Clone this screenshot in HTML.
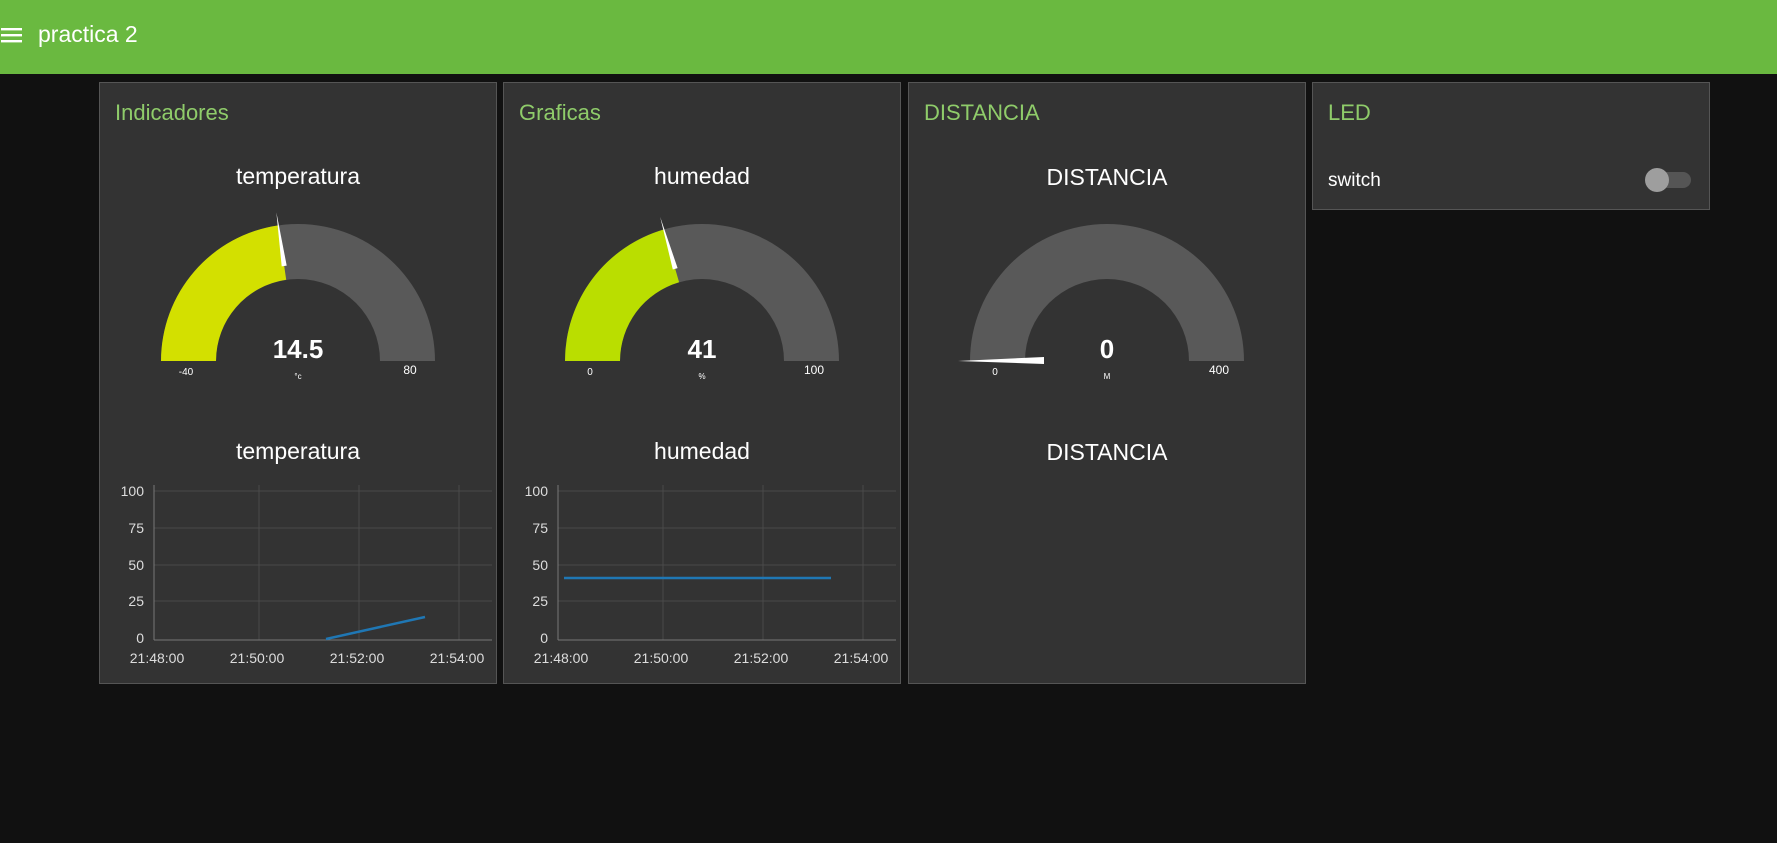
<!DOCTYPE html>
<html><head><meta charset="utf-8"><style>
*{margin:0;padding:0;box-sizing:border-box}
body{width:1777px;height:843px;background:#111;font-family:"Liberation Sans",sans-serif;overflow:hidden;position:relative}
.hdr{position:absolute;left:0;top:0;width:1777px;height:74px;background:#6ab940}
.hdr .t{position:absolute;left:38px;top:21px;color:#fff;font-size:23px}
.panel{position:absolute;top:82px;width:398px;background:#333;border:1px solid #555}
.panel svg{position:absolute;left:0;top:0}
</style></head><body>
<div class="hdr">
<svg style="position:absolute;left:1px;top:27px" width="22" height="16"><rect x="0" y="1" width="21" height="2.4" fill="#fff"/><rect x="0" y="7" width="21" height="2.4" fill="#fff"/><rect x="0" y="13" width="21" height="2.4" fill="#fff"/></svg>
<div class="t">practica 2</div></div>

<div class="panel" style="left:99px;height:602px">
<svg width="398" height="602" font-family="Liberation Sans, sans-serif">
<text x="15" y="37" fill="#8fcc6a" font-size="22">Indicadores</text>
<text x="198" y="101" fill="#fff" font-size="23" text-anchor="middle">temperatura</text>
<path d="M61 278 A137 137 0 0 1 335 278 L280 278 A82 82 0 0 0 116 278 Z" fill="#595959"/>
<path d="M61 278 A137 137 0 0 1 178.3 142.4 L186.2 196.8 A82 82 0 0 0 116 278 Z" fill="#d3e000"/>
<polygon points="176.4,129.5 181.7,183.4 186.7,182.6" fill="#fff"/>
<text x="198" y="275" fill="#fff" font-size="26" font-weight="bold" text-anchor="middle">14.5</text>
<text x="198" y="296" fill="#fff" font-size="8" text-anchor="middle">°c</text>
<text x="86" y="292" fill="#fff" font-size="10" text-anchor="middle">-40</text>
<text x="310" y="291" fill="#fff" font-size="12" text-anchor="middle">80</text>
<text x="198" y="376" fill="#fff" font-size="23" text-anchor="middle">temperatura</text>
<g stroke="#4a4a4a" stroke-width="1">
<line x1="54" y1="408" x2="392" y2="408"/><line x1="54" y1="445" x2="392" y2="445"/><line x1="54" y1="482" x2="392" y2="482"/><line x1="54" y1="518" x2="392" y2="518"/>
<line x1="159" y1="402" x2="159" y2="557"/><line x1="259" y1="402" x2="259" y2="557"/><line x1="359" y1="402" x2="359" y2="557"/>
</g>
<g stroke="#777"><line x1="54" y1="402" x2="54" y2="557"/><line x1="54" y1="557" x2="392" y2="557"/></g>
<g fill="#ddd" font-size="14" text-anchor="end"><text x="44" y="413">100</text><text x="44" y="450">75</text><text x="44" y="487">50</text><text x="44" y="523">25</text><text x="44" y="560">0</text></g>
<g fill="#ddd" font-size="14" text-anchor="middle"><text x="57" y="580">21:48:00</text><text x="157" y="580">21:50:00</text><text x="257" y="580">21:52:00</text><text x="357" y="580">21:54:00</text></g>
<line x1="226" y1="556" x2="325" y2="534" stroke="#1f77b4" stroke-width="2.5"/>
</svg></div>

<div class="panel" style="left:503px;height:602px">
<svg width="398" height="602" font-family="Liberation Sans, sans-serif">
<text x="15" y="37" fill="#8fcc6a" font-size="22">Graficas</text>
<text x="198" y="101" fill="#fff" font-size="23" text-anchor="middle">humedad</text>
<path d="M61 278 A137 137 0 0 1 335 278 L280 278 A82 82 0 0 0 116 278 Z" fill="#595959"/>
<path d="M61 278 A137 137 0 0 1 159.8 146.5 L175.1 199.3 A82 82 0 0 0 116 278 Z" fill="#bade00"/>
<polygon points="156.2,134 168.8,186.5 173.6,185.1" fill="#fff"/>
<text x="198" y="275" fill="#fff" font-size="26" font-weight="bold" text-anchor="middle">41</text>
<text x="198" y="296" fill="#fff" font-size="8" text-anchor="middle">%</text>
<text x="86" y="292" fill="#fff" font-size="10" text-anchor="middle">0</text>
<text x="310" y="291" fill="#fff" font-size="12" text-anchor="middle">100</text>
<text x="198" y="376" fill="#fff" font-size="23" text-anchor="middle">humedad</text>
<g stroke="#4a4a4a" stroke-width="1">
<line x1="54" y1="408" x2="392" y2="408"/><line x1="54" y1="445" x2="392" y2="445"/><line x1="54" y1="482" x2="392" y2="482"/><line x1="54" y1="518" x2="392" y2="518"/>
<line x1="159" y1="402" x2="159" y2="557"/><line x1="259" y1="402" x2="259" y2="557"/><line x1="359" y1="402" x2="359" y2="557"/>
</g>
<g stroke="#777"><line x1="54" y1="402" x2="54" y2="557"/><line x1="54" y1="557" x2="392" y2="557"/></g>
<g fill="#ddd" font-size="14" text-anchor="end"><text x="44" y="413">100</text><text x="44" y="450">75</text><text x="44" y="487">50</text><text x="44" y="523">25</text><text x="44" y="560">0</text></g>
<g fill="#ddd" font-size="14" text-anchor="middle"><text x="57" y="580">21:48:00</text><text x="157" y="580">21:50:00</text><text x="257" y="580">21:52:00</text><text x="357" y="580">21:54:00</text></g>
<line x1="60" y1="495" x2="327" y2="495" stroke="#1f77b4" stroke-width="2.5"/>
</svg></div>

<div class="panel" style="left:908px;height:602px">
<svg width="398" height="602" font-family="Liberation Sans, sans-serif">
<text x="15" y="37" fill="#8fcc6a" font-size="22">DISTANCIA</text>
<text x="198" y="102" fill="#fff" font-size="23" text-anchor="middle">DISTANCIA</text>
<path d="M61 278 A137 137 0 0 1 335 278 L280 278 A82 82 0 0 0 116 278 Z" fill="#595959"/>
<polygon points="49,278 135,274 135,281" fill="#fff"/>
<text x="198" y="275" fill="#fff" font-size="26" font-weight="bold" text-anchor="middle">0</text>
<text x="198" y="296" fill="#fff" font-size="8" text-anchor="middle">M</text>
<text x="86" y="292" fill="#fff" font-size="10" text-anchor="middle">0</text>
<text x="310" y="291" fill="#fff" font-size="12" text-anchor="middle">400</text>
<text x="198" y="377" fill="#fff" font-size="23" text-anchor="middle">DISTANCIA</text>
</svg></div>

<div class="panel" style="left:1312px;height:128px">
<svg width="398" height="128" font-family="Liberation Sans, sans-serif">
<text x="15" y="37" fill="#8fcc6a" font-size="22">LED</text>
<text x="15" y="103" fill="#fff" font-size="19">switch</text>
<rect x="336" y="89" width="42" height="16" rx="8" fill="#555"/>
<circle cx="344" cy="97" r="12" fill="#9e9e9e"/>
</svg></div>
</body></html>
